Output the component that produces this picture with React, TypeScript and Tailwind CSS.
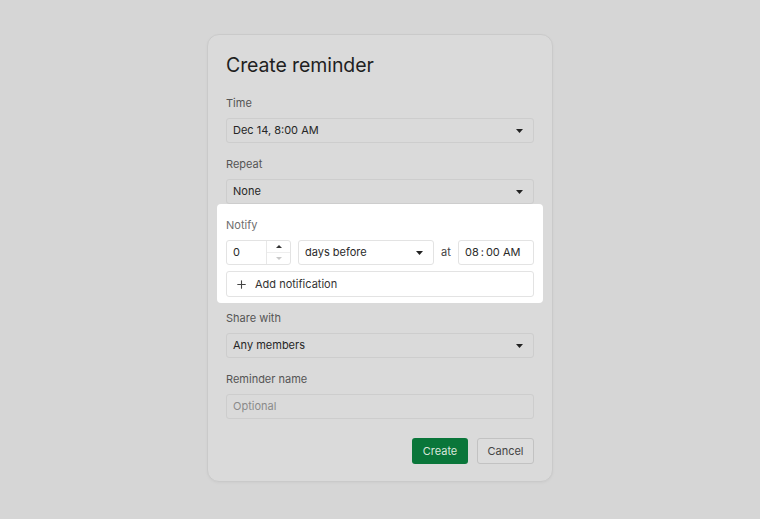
import { FiPlus } from 'react-icons/fi';

function Caret({ className = 'text-[#222]' }: { className?: string }) {
  return (
    <svg width="7" height="4" viewBox="0 0 7 4" className={className}>
      <path d="M0 0h7L3.5 4z" fill="currentColor" />
    </svg>
  );
}

function Label({ children, light }: { children: string; light?: boolean }) {
  return (
    <div
      className={`text-[11px] leading-4 mb-[7px] ${light ? 'text-[#6e6e6e]' : 'text-[#555]'}`}
    >
      {children}
    </div>
  );
}

function Select({ value }: { value: string }) {
  return (
    <div className="flex items-center justify-between h-[25px] px-[6px] pr-[10px] rounded-[3px] border border-[#cdcdcd] bg-[#dadada] text-[11px] text-[#262626]">
      <span>{value}</span>
      <Caret />
    </div>
  );
}

function App() {
  return (
    <div
      className="w-[760px] h-[519px] bg-[#d6d6d6] flex pl-[207px] pt-[34px]"
      style={{ fontFamily: 'Inter, "Noto Sans", sans-serif' }}
    >
      <div className="w-[346px] h-[448px] rounded-[12px] border border-[#cacaca] bg-[#dadada] px-[18px] pt-[19px] shadow-[0_1px_3px_rgba(0,0,0,0.04)]">
        <h1 className="text-[19.5px] leading-[22px] text-[#1f1f1f] tracking-[-0.1px]">Create reminder</h1>

        <div className="mt-[19px]">
          <Label>Time</Label>
          <Select value="Dec 14, 8:00 AM" />
        </div>

        <div className="mt-[13px]">
          <Label>Repeat</Label>
          <Select value="None" />
        </div>

        <div className="-mx-[9px] px-[9px] pt-[13px] pb-[6px] bg-white rounded-[4px]">
          <Label light>Notify</Label>
          <div className="flex items-center h-[25px] text-[11px] text-[#2a2a2a]">
            <div className="flex w-[65px] h-full rounded-[3px] border border-[#e3e3e3]">
              <div className="flex-1 flex items-center px-[6px]">0</div>
              <div className="w-[24px] flex flex-col border-l border-[#e8e8e8]">
                <div className="flex-1 flex items-center justify-center border-b border-[#eeeeee]">
                  <svg width="6" height="3" viewBox="0 0 6 3" className="text-[#333]">
                    <path d="M3 0L6 3H0z" fill="currentColor" />
                  </svg>
                </div>
                <div className="flex-1 flex items-center justify-center">
                  <svg width="6" height="3" viewBox="0 0 6 3" className="text-[#c8c8c8]">
                    <path d="M0 0h6L3 3z" fill="currentColor" />
                  </svg>
                </div>
              </div>
            </div>
            <div className="ml-[7px] w-[136px] h-full flex items-center justify-between px-[6px] pr-[10px] rounded-[3px] border border-[#e3e3e3]">
              <span>days before</span>
              <Caret />
            </div>
            <span className="ml-[7px] w-[17px] text-[#444]">at</span>
            <div className="flex-1 h-full flex items-center px-[6px] rounded-[3px] border border-[#e3e3e3]">
              08<span className="mx-[2px]">:</span>00 AM
            </div>
          </div>
          <div className="mt-[6px] h-[26px] flex items-center gap-[7px] px-[8px] rounded-[3px] border border-[#e3e3e3] text-[11px] text-[#333]">
            <FiPlus size={13} className="text-[#444]" />
            <span>Add notification</span>
          </div>
        </div>

        <div className="mt-[7px]">
          <Label>Share with</Label>
          <Select value="Any members" />
        </div>

        <div className="mt-[13px]">
          <Label>Reminder name</Label>
          <div className="flex items-center h-[25px] px-[6px] rounded-[3px] border border-[#cdcdcd] bg-[#dadada] text-[11px] text-[#8a8a8a]">
            Optional
          </div>
        </div>

        <div className="mt-[19px] flex justify-end gap-[9px]">
          <button className="h-[26px] w-[56px] rounded-[3px] bg-[#0a763a] text-[11px] text-[#d9e6dc]">
            Create
          </button>
          <button className="h-[26px] w-[57px] rounded-[3px] border border-[#c2c2c2] bg-[#dcdcdc] text-[11px] text-[#444]">
            Cancel
          </button>
        </div>
      </div>
    </div>
  );
}

export default App;
